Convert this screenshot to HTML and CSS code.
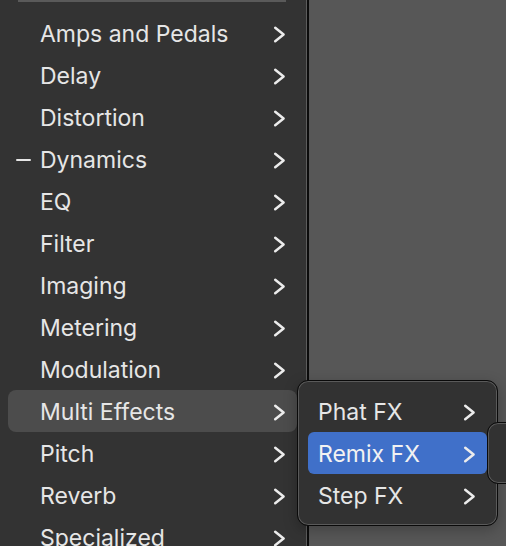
FILE: index.html
```html
<!DOCTYPE html>
<html lang="en">
<head>
<meta charset="utf-8">
<title>Plug-in menu</title>
<link rel="stylesheet" href="styles.css">
</head>
<body>
<div class="screen">
  <div class="menu main">
    <div class="sep"></div>
    <div class="list">
      <div class="row"><span class="mark"></span><span class="label">Amps and Pedals</span><svg class="chev" viewBox="0 0 13 17"><path d="M2.2 1.8 L10.6 8.5 L2.2 15.2"/></svg></div>
      <div class="row"><span class="mark"></span><span class="label">Delay</span><svg class="chev" viewBox="0 0 13 17"><path d="M2.2 1.8 L10.6 8.5 L2.2 15.2"/></svg></div>
      <div class="row"><span class="mark"></span><span class="label">Distortion</span><svg class="chev" viewBox="0 0 13 17"><path d="M2.2 1.8 L10.6 8.5 L2.2 15.2"/></svg></div>
      <div class="row"><span class="mark dash"></span><span class="label">Dynamics</span><svg class="chev" viewBox="0 0 13 17"><path d="M2.2 1.8 L10.6 8.5 L2.2 15.2"/></svg></div>
      <div class="row"><span class="mark"></span><span class="label">EQ</span><svg class="chev" viewBox="0 0 13 17"><path d="M2.2 1.8 L10.6 8.5 L2.2 15.2"/></svg></div>
      <div class="row"><span class="mark"></span><span class="label">Filter</span><svg class="chev" viewBox="0 0 13 17"><path d="M2.2 1.8 L10.6 8.5 L2.2 15.2"/></svg></div>
      <div class="row"><span class="mark"></span><span class="label">Imaging</span><svg class="chev" viewBox="0 0 13 17"><path d="M2.2 1.8 L10.6 8.5 L2.2 15.2"/></svg></div>
      <div class="row"><span class="mark"></span><span class="label">Metering</span><svg class="chev" viewBox="0 0 13 17"><path d="M2.2 1.8 L10.6 8.5 L2.2 15.2"/></svg></div>
      <div class="row"><span class="mark"></span><span class="label">Modulation</span><svg class="chev" viewBox="0 0 13 17"><path d="M2.2 1.8 L10.6 8.5 L2.2 15.2"/></svg></div>
      <div class="row hover"><span class="mark"></span><span class="label">Multi Effects</span><svg class="chev" viewBox="0 0 13 17"><path d="M2.2 1.8 L10.6 8.5 L2.2 15.2"/></svg></div>
      <div class="row"><span class="mark"></span><span class="label">Pitch</span><svg class="chev" viewBox="0 0 13 17"><path d="M2.2 1.8 L10.6 8.5 L2.2 15.2"/></svg></div>
      <div class="row"><span class="mark"></span><span class="label">Reverb</span><svg class="chev" viewBox="0 0 13 17"><path d="M2.2 1.8 L10.6 8.5 L2.2 15.2"/></svg></div>
      <div class="row"><span class="mark"></span><span class="label">Specialized</span><svg class="chev" viewBox="0 0 13 17"><path d="M2.2 1.8 L10.6 8.5 L2.2 15.2"/></svg></div>
    </div>
  </div>

  <div class="menu sub">
    <div class="row"><span class="label">Phat FX</span><svg class="chev" viewBox="0 0 13 17"><path d="M2.2 1.8 L10.6 8.5 L2.2 15.2"/></svg></div>
    <div class="row selected"><span class="label">Remix FX</span><svg class="chev" viewBox="0 0 13 17"><path d="M2.2 1.8 L10.6 8.5 L2.2 15.2"/></svg></div>
    <div class="row"><span class="label">Step FX</span><svg class="chev" viewBox="0 0 13 17"><path d="M2.2 1.8 L10.6 8.5 L2.2 15.2"/></svg></div>
  </div>

  <div class="menu sub2"></div>
</div>
</body>
</html>
```

FILE: styles.css
```css
* { box-sizing: border-box; }

html, body {
  margin: 0;
  padding: 0;
}

body {
  width: 506px;
  height: 546px;
  overflow: hidden;
  font-family: "Inter", "Liberation Sans", sans-serif;
  color: #e6e6e6;
  background: #565656;
}

.screen {
  position: relative;
  width: 506px;
  height: 546px;
  overflow: hidden;
  display: flex;
  background: linear-gradient(90deg, #4e4e4e 0px, #555555 18px, #575757 60px, #575757 100%);
}

.menu.main {
  width: 309px;
  height: 546px;
  flex: none;
  background: #333333;
  border-right: 2px solid #0c0c0c;
  box-shadow: inset -1px 0 0 #5c5c5c;
  padding: 0 10px 0 8px;
  display: flex;
  flex-direction: column;
}

.sep {
  height: 2px;
  margin: 0 11px 0 10px;
  background: #5a5a5a;
  flex: none;
}

.list {
  padding-top: 10px;
  display: flex;
  flex-direction: column;
}

.row {
  height: 42px;
  flex: none;
  display: flex;
  align-items: center;
  border-radius: 8px;
  font-size: 23px;
  line-height: 1;
  padding-top: 3px;
}

.main .row {
  width: 289px;
  padding-right: 11px;
}

.mark {
  width: 32px;
  flex: none;
  display: flex;
  align-items: center;
  padding-left: 8px;
}

.mark.dash::before {
  content: "";
  width: 15px;
  height: 2px;
  background: #e6e6e6;
  border-radius: 1px;
  margin-top: -2px;
}

.label {
  flex: 1;
  white-space: nowrap;
}

.chev {
  width: 13px;
  height: 17px;
  flex: none;
  margin-top: -1px;
}

.chev path {
  fill: none;
  stroke: #ececec;
  stroke-width: 2.5;
  stroke-linecap: round;
  stroke-linejoin: round;
}

.row.hover {
  background: #4c4c4c;
}

.menu.sub {
  position: absolute;
  left: 297px;
  top: 380px;
  width: 201px;
  height: 146px;
  background: #323232;
  border: 1px solid #0a0a0a;
  border-radius: 11px;
  box-shadow: inset 0 0 0 1px #5a5a5a, 0 4px 14px rgba(0, 0, 0, 0.25);
  padding: 9px 10px;
  display: flex;
  flex-direction: column;
}

.sub .row {
  padding-left: 10px;
  padding-right: 11px;
  border-radius: 6px;
}

.row.selected {
  background: #4070c9;
  color: #f2f2f2;
}

.menu.sub2 {
  position: absolute;
  left: 487px;
  top: 422px;
  width: 60px;
  height: 62px;
  background: #323232;
  border: 1px solid #0a0a0a;
  border-radius: 11px;
  box-shadow: inset 0 0 0 1px #5a5a5a;
}
```
